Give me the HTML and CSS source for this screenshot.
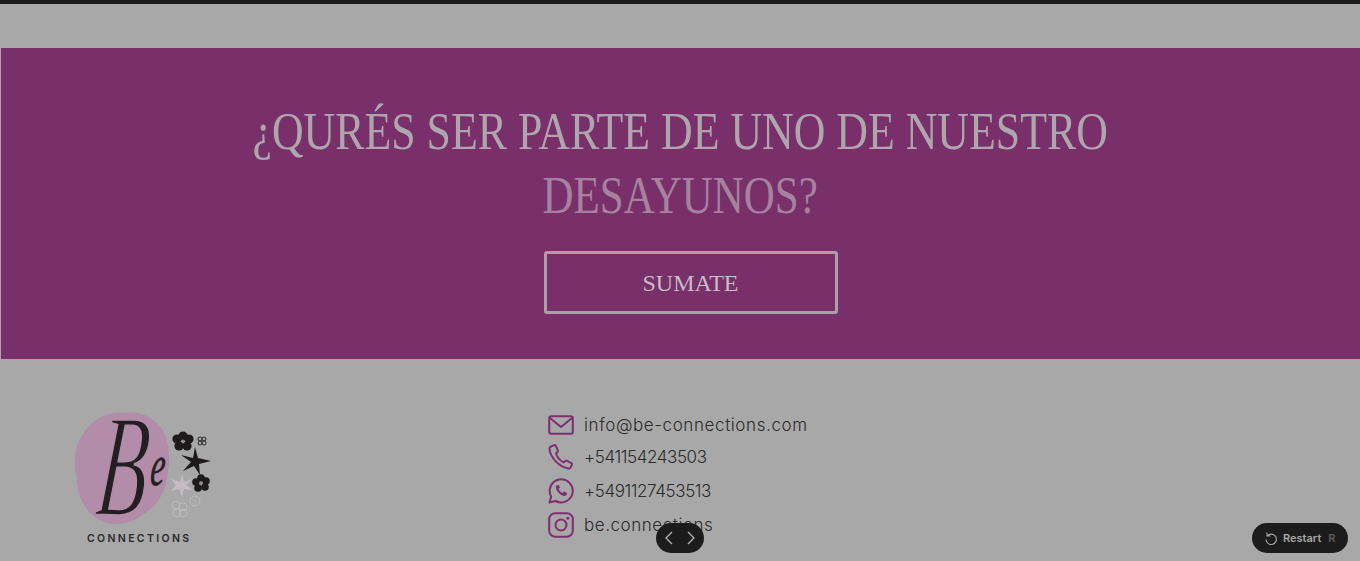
FILE: index.html
```html
<!DOCTYPE html>
<html lang="es">
<head>
<meta charset="utf-8">
<title>Be Connections</title>
<link rel="stylesheet" href="styles.css">
</head>
<body>
<div class="topbar"></div>
<section class="banner">
  <h2 class="title">
    <span class="line line-one">¿QURÉS SER PARTE DE UNO DE NUESTRO</span>
    <span class="line line-two">DESAYUNOS?</span>
  </h2>
  <a class="cta">SUMATE</a>
</section>
<footer class="footer">
  <div class="logo">
    <svg class="logo-art" width="140" height="122" viewBox="0 0 140 122">
      <path class="blob" d="M2 62C0 56 2 50 1 44C3 30 10 18 22 9C30 3 42 1 52 2C60 0 70 3 76 7C86 13 92 22 94 34C96 46 95 60 92 72C88 88 80 96 70 103C60 110 46 116 34 112C24 110 14 102 9 92C4 84 3 72 2 62Z"/>
      <text class="be" transform="translate(20 104) scale(.56 1) skewX(-10)">B<tspan class="be-e" dx="4" dy="-30">e</tspan></text>
      <g class="flower-dark">
        <circle cx="109" cy="25" r="4.600"/><circle cx="115" cy="28" r="4.600"/><circle cx="113" cy="35" r="4.600"/><circle cx="105" cy="35" r="4.600"/><circle cx="103" cy="28" r="4.600"/>
      </g>
      <circle class="flower-eye" cx="109" cy="30" r="1.500"/>
      <g class="flower-small">
        <circle cx="126" cy="28" r="2"/><circle cx="130" cy="28" r="2"/><circle cx="126" cy="32" r="2"/><circle cx="130" cy="32" r="2"/>
      </g>
      <path class="star" d="M121 36L124 47L137 50L125 53L126 64L120 55L109 60L117 51L107 44L119 47Z"/>
      <g class="flower-dark">
        <circle cx="127" cy="67" r="3.800"/><circle cx="132" cy="70" r="3.800"/><circle cx="131" cy="76" r="3.800"/><circle cx="124" cy="77" r="3.800"/><circle cx="122" cy="71" r="3.800"/>
      </g>
      <circle class="flower-eye" cx="127" cy="72" r="1.800"/>
      <path class="star-pale" d="M108 63L110 71L118 68L112 74L119 79L110 78L108 86L105 78L97 80L102 74L97 68L106 71Z"/>
      <g class="outline-flower">
        <circle cx="102" cy="94" r="4"/><circle cx="109" cy="96" r="4"/><circle cx="103" cy="102" r="4"/><circle cx="109" cy="102" r="4"/>
        <circle cx="121" cy="90" r="5"/>
      </g>
    </svg>
    <span class="logo-word">CONNECTIONS</span>
  </div>
  <ul class="contacts">
    <li class="contact contact-mail">
      <svg class="icon" width="26" height="20" viewBox="0 0 26 20"><rect x="1.200" y="1.200" width="23.600" height="17.600" rx="2"/><path d="M2 3l11 9 11-9"/></svg>
      <span>info@be-connections.com</span>
    </li>
    <li class="contact contact-phone">
      <svg class="icon" width="26" height="26" viewBox="0 0 26 26"><path d="M3 2.500l3-1.300c.8-.3 1.500 0 1.800.7l2 4.300c.3.700.1 1.300-.4 1.800L8 9.500c1.200 3.700 4 7 7.600 9l1.700-1.500c.5-.5 1.200-.5 1.800-.2l4.200 2.400c.7.400.9 1.100.5 1.800l-1.500 2.700c-.4.700-1 1-1.800.9C11.500 23 2 13.500 1.500 4.500c0-.9.600-1.600 1.500-2z"/></svg>
      <span>+541154243503</span>
    </li>
    <li class="contact contact-wa">
      <svg class="icon" width="26" height="26" viewBox="0 0 26 26"><path d="M1.500 24.500l1.700-6A11.500 11.500 0 1 1 7.800 23z"/><path class="wa-handset" d="M9.500 7c-1.500.5-2 2-1.500 3.800 1 3 4 6 7 7 2 .5 3.500-.3 4-1.800.2-.6 0-1-.5-1.300l-2-1c-.5-.2-.9-.1-1.200.3l-.7.900c-1.700-.6-3.300-2.200-4-4l.8-.7c.4-.3.500-.7.300-1.200L11 7.500c-.3-.5-.9-.7-1.500-.5z"/></svg>
      <span>+5491127453513</span>
    </li>
    <li class="contact contact-ig">
      <svg class="icon" width="26" height="26" viewBox="0 0 26 26"><rect x="1.200" y="1.200" width="23.600" height="23.600" rx="6"/><circle cx="13" cy="13" r="5.500"/><circle class="ig-dot" cx="19.800" cy="6.200" r="1.500"/></svg>
      <span>be.connections</span>
    </li>
  </ul>
</footer>
<nav class="pager">
  <svg width="48" height="30" viewBox="0 0 48 30"><path d="M16 9l-6 6 6 6M32 9l6 6-6 6"/></svg>
</nav>
<div class="restart">
  <svg width="14" height="14" viewBox="0 0 14 14"><path d="M3 1.500v3.500h3.500M3.200 5A5.200 5.200 0 1 1 2 8.500"/></svg>
  <span class="restart-label">Restart</span>
  <span class="restart-key">R</span>
</div>
</body>
</html>
```
FILE: styles.css
```css
* { box-sizing: border-box; }
html, body { margin: 0; height: 561px; overflow: hidden; }
body { background: #a8a8a8; font-family: "Inter", "Liberation Sans", sans-serif; position: relative; }
.topbar { height: 4px; background: #1c1c1c; margin-bottom: 44px; }
.banner {
  height: 311px; margin-left: 1px; background: #782f6a;
  display: flex; flex-direction: column; align-items: center; padding-top: 51px;
}
.title {
  margin: 0; font-family: "Liberation Serif", serif; font-weight: 400;
  font-size: 53px; line-height: 64px; text-align: center;
}
.line { display: block; white-space: nowrap; }
.line-one { color: #aea6ac; transform: scaleX(.827); }
.line-two { color: #a5839e; transform: scaleX(.81); }
.cta {
  margin: 24px 0 0 20px; width: 294px; height: 63px; border: 3px solid #aba0a9; border-radius: 3px;
  display: flex; align-items: center; justify-content: center; padding-top: 1px;
  font-family: "Liberation Serif", serif; font-size: 24px; color: #c8bcc5;
}
.footer { display: flex; padding: 52px 0 0 74px; }
.logo { width: 474px; display: flex; flex-direction: column; }
.logo-art { display: block; overflow: visible; }
.blob { fill: #b28ca8; }
.be {
  font-family: "Liberation Serif", serif; font-style: italic; font-size: 146px;
  fill: #231e22; stroke: #b28ca8; stroke-width: 2.500px; paint-order: normal;
}
.be-e { font-size: 58px; stroke-width: .6px; stroke: #231e22; }
.flower-dark circle, .star { fill: #1d1a1c; }
.flower-eye { fill: #8d8a8c; }
.flower-small circle { fill: none; stroke: #2a2729; stroke-width: 1; }
.star-pale { fill: #c4bcc2; }
.outline-flower circle { fill: none; stroke: #bdb9bc; stroke-width: 1; }
.logo-word { margin-left: 13px; font-size: 10.500px; font-weight: 600; letter-spacing: 2.350px; color: #2a2a2a; line-height: 12px; }
.contacts { list-style: none; margin: 0; padding: 0; color: #2b2b2b; font-size: 17px; font-weight: 300; }
.contact { display: flex; align-items: center; gap: 10px; white-space: nowrap; }
.contact svg { flex: none; }
.contact-mail { height: 26px; margin-top: 1px; letter-spacing: .6px; }
.contact-phone { height: 26px; margin-top: 6px; letter-spacing: -.4px; }
.contact-wa { height: 26px; margin-top: 8px; letter-spacing: -.4px; }
.contact-ig { height: 26px; margin-top: 8px; letter-spacing: .55px; }
.icon { fill: none; stroke: #7e2f6f; stroke-width: 2; stroke-linejoin: round; stroke-linecap: round; }
.icon .ig-dot { fill: #7e2f6f; stroke: none; }
.icon .wa-handset { fill: #7e2f6f; stroke: none; }
.pager {
  position: absolute; left: 656px; top: 523px; width: 48px; height: 30px;
  border-radius: 15px; background: #1c1c1c; display: flex;
}
.pager svg { fill: none; stroke: #b5b5b5; stroke-width: 1.300; }
.restart {
  position: absolute; left: 1252px; top: 523px; width: 96px; height: 30px; border-radius: 15px;
  background: #1c1c1c; display: flex; align-items: center; padding-left: 12px;
  font-size: 11px; font-weight: 600;
}
.restart svg { fill: none; stroke: #a8a8a8; stroke-width: 1.100; flex: none; }
.restart-label { margin-left: 5px; color: #a8a8a8; }
.restart-key { margin-left: 7px; color: #5c5c5c; }
```
